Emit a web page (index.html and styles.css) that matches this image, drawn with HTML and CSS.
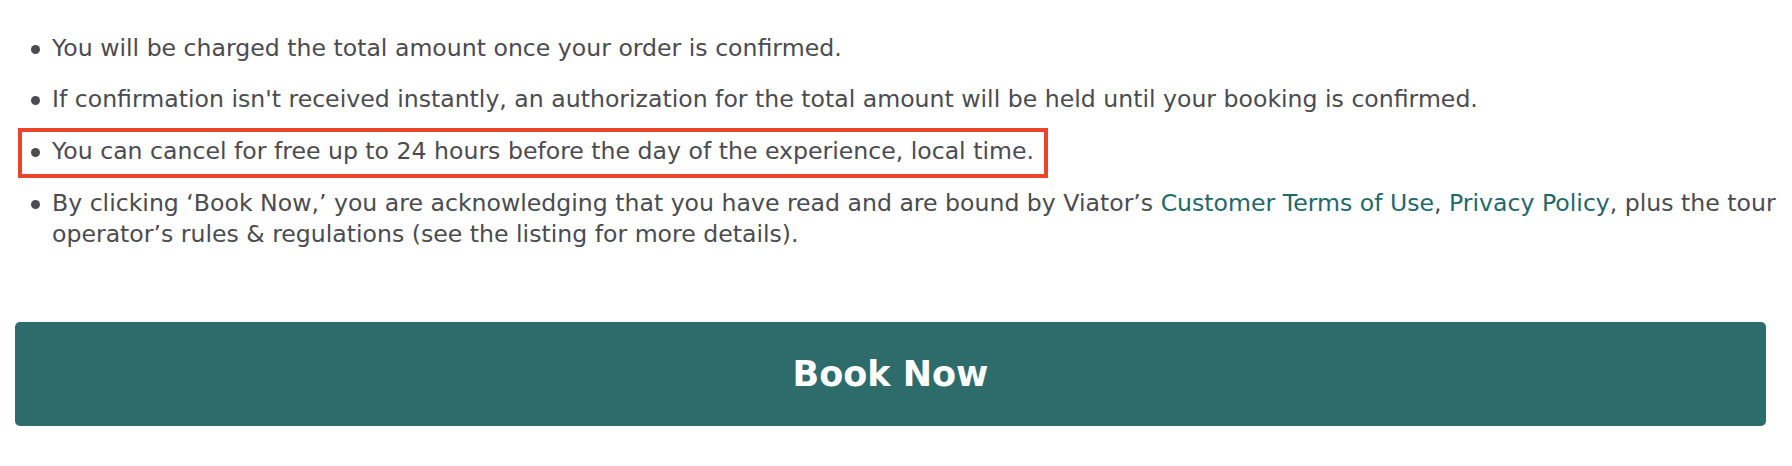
FILE: index.html
```html
<!DOCTYPE html>
<html lang="en">
<head>
<meta charset="utf-8">
<title>Book Now</title>
<link rel="stylesheet" href="styles.css">
</head>
<body>
<section class="checkout">
  <ul class="terms">
    <li class="term"><span class="dot"></span><span class="term-text">You will be charged the total amount once your order is confirmed.</span></li>
    <li class="term term-spaced"><span class="dot"></span><span class="term-text">If confirmation isn't received instantly, an authorization for the total amount will be held until your booking is confirmed.</span></li>
    <li class="term term-highlight"><span class="dot"></span><span class="term-text">You can cancel for free up to 24 hours before the day of the experience, local time.</span></li>
    <li class="term term-last"><span class="dot"></span><p class="term-text">By clicking ‘Book Now,’ you are acknowledging that you have read and are bound by Viator’s <a class="link" href="#">Customer Terms of Use</a>, <a class="link" href="#">Privacy Policy</a>, plus the tour operator’s rules &amp; regulations (see the listing for more details).</p></li>
  </ul>
  <button class="book-btn" type="button">Book Now</button>
</section>
</body>
</html>
```
FILE: styles.css
```css
html, body {
  margin: 0;
  padding: 0;
  background: #ffffff;
}

.checkout {
  display: flex;
  flex-direction: column;
  font-family: "DejaVu Sans", "Noto Sans", sans-serif;
  color: #4b4b50;
}

.terms {
  list-style: none;
  margin: 0;
  padding: 33px 0 0 0;
  display: flex;
  flex-direction: column;
  align-items: flex-start;
}

.term {
  display: flex;
  align-items: flex-start;
  padding-left: 31px;
  padding-right: 0;
  font-size: 23.6px;
  line-height: 31px;
  margin-bottom: 20px;
}

.term-spaced {
  margin-bottom: 13px;
}

.term-highlight {
  margin-left: 18px;
  padding: 4px 10px 7px 9px;
  border: 4px solid #ea4429;
  margin-bottom: 10px;
}

.term-last {
  margin-bottom: 0;
}

.dot {
  flex: 0 0 auto;
  width: 9px;
  height: 9px;
  border-radius: 50%;
  background: #4b4b50;
  margin-top: 12px;
  margin-right: 12px;
}

.term-text {
  flex: 1 1 auto;
  margin: 0;
}

.link {
  color: #22696a;
  text-decoration: none;
}

.book-btn {
  margin: 72px 26px 0 15px;
  height: 104px;
  border: none;
  border-radius: 5px;
  background: #2e6b6b;
  color: #ffffff;
  font-family: "DejaVu Sans", "Noto Sans", sans-serif;
  font-weight: 700;
  font-size: 35px;
  cursor: pointer;
}
```
